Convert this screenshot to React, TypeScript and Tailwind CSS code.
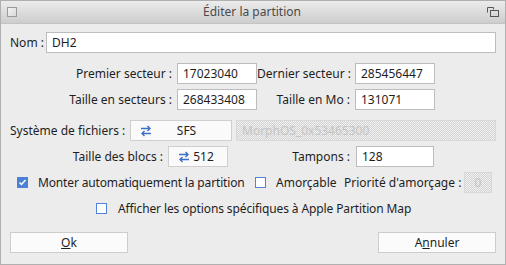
import React from 'react';

const Field: React.FC<{ value: string; className?: string }> = ({ value, className = '' }) => (
  <div className={`h-[21px] shrink-0 bg-white border border-[#bdbdbd] flex items-center pl-[5px] text-[12px] text-[#1e1e1e] ${className}`}>
    {value}
  </div>
);

const Disabled: React.FC<{ value: string; className?: string; center?: boolean }> = ({ value, className = '', center }) => (
  <div
    className={`h-[21px] shrink-0 border border-[#d8d8d8] flex items-center text-[12px] text-[#c4c4c4] bg-[#ececec] bg-[image:repeating-conic-gradient(#d2d2d2_0_25%,#f2f2f2_0_50%)] bg-[length:2px_2px] ${center ? 'justify-center' : 'pl-[5px]'} ${className}`}
  >
    {value}
  </div>
);

const CycleIcon = () => (
  <svg width="12" height="12" viewBox="0 0 12 12" fill="none" stroke="#3c70c8" strokeWidth="1.4">
    <path d="M1 3.5h9M7.5 1l2.5 2.5L7.5 6" />
    <path d="M11 8.5H2M4.5 6L2 8.5 4.5 11" />
  </svg>
);

const Cycle: React.FC<{ value: string; className?: string }> = ({ value, className = '' }) => (
  <div className={`h-[21px] shrink-0 bg-[#fafafa] border border-[#cfcfcf] flex items-center pl-[9px] pr-[10px] text-[12px] text-[#1e1e1e] ${className}`}>
    <CycleIcon />
    <span className="flex-1 text-center">{value}</span>
  </div>
);

const Check: React.FC<{ checked?: boolean }> = ({ checked }) =>
  checked ? (
    <div className="w-[11px] h-[11px] shrink-0 bg-[#4a80d6] flex items-center justify-center">
      <svg width="9" height="9" viewBox="0 0 9 9" fill="none" stroke="white" strokeWidth="1.5">
        <path d="M1.5 4.5l2 2 4-4.5" />
      </svg>
    </div>
  ) : (
    <div className="w-[11px] h-[11px] shrink-0 bg-white border border-[#4f84d8]" />
  );

const Button: React.FC<{ children: React.ReactNode }> = ({ children }) => (
  <div className="w-[118px] h-[21px] bg-[#fbfbfb] border border-[#cdcdcd] flex items-center justify-center text-[12px] text-[#1e1e1e]">
    {children}
  </div>
);

const Label: React.FC<{ children: React.ReactNode; className?: string }> = ({ children, className = '' }) => (
  <span className={`shrink-0 whitespace-nowrap ${className}`}>{children}</span>
);

export default function App() {
  return (
    <div className="w-[506px] h-[265px] bg-[#ececec] border border-[#b0b0b0] flex flex-col font-['Noto_Sans',sans-serif] text-[12px] text-[#1e1e1e] overflow-hidden">
      {/* title bar */}
      <div className="h-[23px] shrink-0 bg-gradient-to-b from-[#ececec] to-[#cdcdcd] border-b border-[#c4c4c4] flex items-center px-[6px]">
        <div className="w-[10px] h-[10px] border border-[#9a9a9a] bg-gradient-to-br from-[#f4f4f4] to-[#d8d8d8]" />
        <div className="flex-1 text-center text-[#4a4a4a] text-[12px]">Éditer la partition</div>
        <svg width="12" height="10" viewBox="0 0 12 10" fill="none" stroke="#555" strokeWidth="1">
          <path d="M0.5 5.5V0.5h6v2" />
          <rect x="3.5" y="3.5" width="8" height="6" />
        </svg>
      </div>

      <div className="flex flex-col px-[9px]">
        {/* Nom */}
        <div className="flex items-center mt-[8px]">
          <Label className="w-[36px]">Nom :</Label>
          <Field value="DH2" className="flex-1" />
        </div>

        {/* secteurs */}
        <div className="flex items-center mt-[10px]">
          <Label className="w-[167px] text-right pr-[5px]">Premier secteur :</Label>
          <Field value="17023040" className="w-[80px]" />
          <Label className="w-[98px] text-right pr-[5px]">Dernier secteur :</Label>
          <Field value="285456447" className="w-[80px]" />
        </div>
        <div className="flex items-center mt-[5px]">
          <Label className="w-[167px] text-right pr-[5px]">Taille en secteurs :</Label>
          <Field value="268433408" className="w-[80px]" />
          <Label className="w-[98px] text-right pr-[5px]">Taille en Mo :</Label>
          <Field value="131071" className="w-[80px]" />
        </div>

        {/* fs */}
        <div className="flex items-center mt-[10px]">
          <Label className="w-[120px]">Système de fichiers :</Label>
          <Cycle value="SFS" className="w-[102px]" />
          <Disabled value="MorphOS_0x53465300" className="flex-1 shrink ml-[4px]" />
        </div>
        <div className="flex items-center mt-[5px]">
          <Label className="w-[158px] text-right pr-[5px]">Taille des blocs :</Label>
          <Cycle value="512" className="w-[60px]" />
          <Label className="w-[128px] text-right pr-[6px]">Tampons :</Label>
          <Field value="128" className="w-[78px]" />
        </div>

        {/* options */}
        <div className="flex items-center mt-[5px] h-[21px] pl-[7px]">
          <Check checked />
          <Label className="w-[227px] pl-[10px] tracking-[-0.15px]">Monter automatiquement la partition</Label>
          <Check />
          <Label className="w-[78px] pl-[10px]">Amorçable</Label>
          <Label className="w-[120px]">Priorité d'amorçage :</Label>
          <Disabled value="0" center className="w-[28px]" />
        </div>
        <div className="flex items-center mt-[5px] h-[21px] pl-[86px]">
          <Check />
          <Label className="pl-[11px] tracking-[-0.12px]">Afficher les options spécifiques à Apple Partition Map</Label>
        </div>

        {/* buttons */}
        <div className="flex items-center justify-between mt-[13px]">
          <Button>
            <span className="underline">O</span>k
          </Button>
          <Button>
            A<span className="underline">n</span>nuler
          </Button>
        </div>
      </div>
    </div>
  );
}
